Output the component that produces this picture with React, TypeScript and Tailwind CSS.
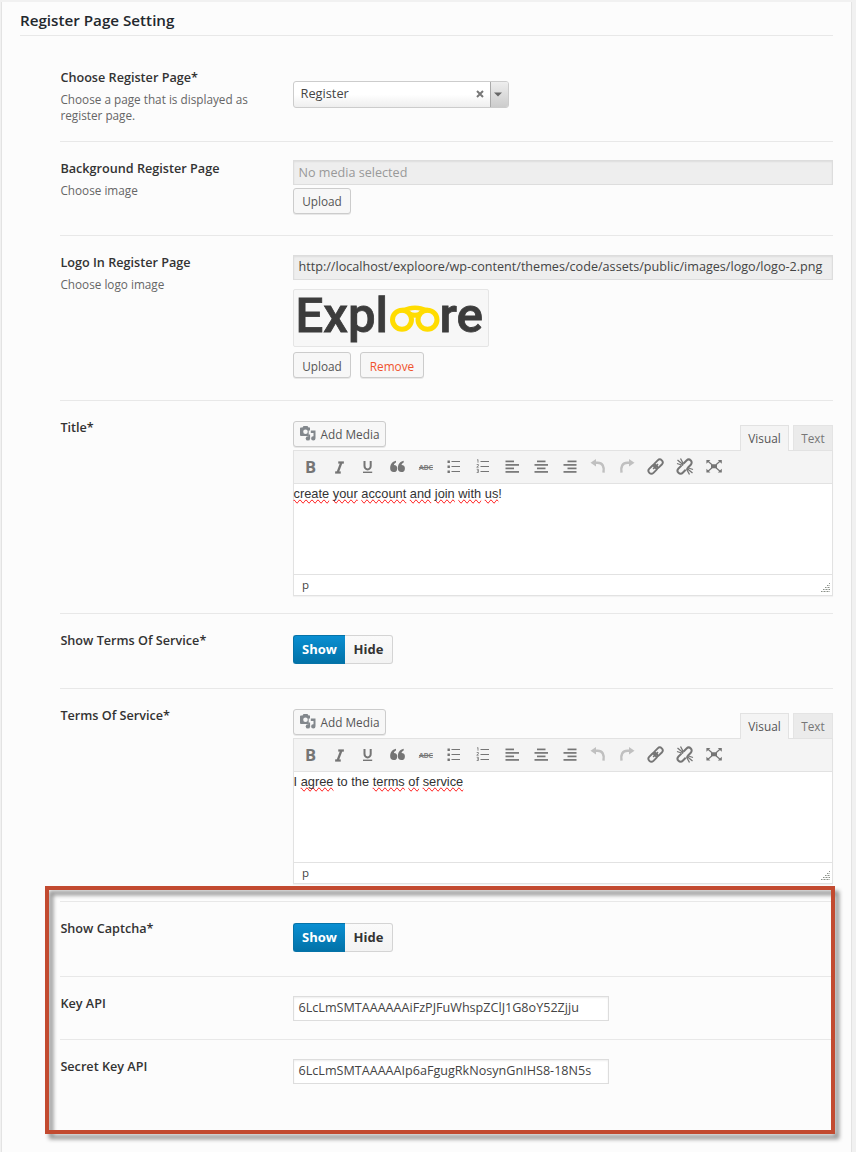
import React from "react";
import { Italic } from "lucide-react";

function Row({
  label,
  desc,
  className,
  children,
}: {
  label: string;
  desc?: React.ReactNode;
  className: string;
  children: React.ReactNode;
}) {
  return (
    <div className={`ml-[60px] mr-[23px] flex ${className}`}>
      <div className="w-[233px] shrink-0 pt-[17px] pl-[0.4px]">
        <div className="text-[12.65px] font-semibold leading-[18px] text-[#333]">{label}</div>
        {desc && <div className="mt-[6px] whitespace-nowrap text-[11.75px] leading-[15.5px] text-[#666]">{desc}</div>}
      </div>
      <div className="w-[540px]">{children}</div>
    </div>
  );
}

function Button({ children, className = "" }: { children: React.ReactNode; className?: string }) {
  return (
    <button
      className={`flex h-[26px] items-center justify-center rounded-[3px] border border-[#ccc] bg-[#f7f7f7] text-[11.8px] leading-[16px] text-[#555] shadow-[0_1px_0_rgba(0,0,0,0.08)] ${className}`}
    >
      {children}
    </button>
  );
}

function Toggle() {
  return (
    <div className="flex h-[29px] text-[13px] font-bold">
      <div className="flex w-[52px] items-center justify-center rounded-l-[3px] border border-r-0 border-[#0673a8] bg-linear-to-b from-[#0a8fd2] to-[#0272a8] text-white">
        Show
      </div>
      <div className="flex w-[48px] items-center justify-center rounded-r-[3px] border border-l-0 border-[#d4d4d4] bg-linear-to-b from-[#fafafa] to-[#f3f3f3] text-[#333]">
        Hide
      </div>
    </div>
  );
}

function Glyph({ children, faded = false }: { children: React.ReactNode; faded?: boolean }) {
  return (
    <svg width="20" height="20" viewBox="0 0 20 20" fill="none" stroke={faded ? "#c0c0c0" : "#757575"} className="shrink-0">
      {children}
    </svg>
  );
}

function Lines({ rows }: { rows: number[][] }) {
  return (
    <Glyph>
      {rows.map(([a, b], i) => (
        <path key={i} d={`M${a} ${4.4 + i * 3.5}H${b}`} strokeWidth="1.7" />
      ))}
    </Glyph>
  );
}

function Toolbar() {
  return (
    <div className="flex h-[33px] items-center gap-[8.8px] border-b border-[#e2e2e2] bg-[#f4f4f4] pl-[6.5px]">
      <span className="w-5 shrink-0 text-center text-[16.5px] font-bold leading-5 text-[#757575]">B</span>
      <span className="flex w-5 shrink-0 justify-center">
        <Italic size={15} strokeWidth={3.6} color="#757575" strokeLinecap="butt" />
      </span>
      <Glyph>
        <path d="M6.5 4v5a3.1 3.4 0 0 0 6.2 0V4" strokeWidth="2" />
        <path d="M5 15.300h9.200" strokeWidth="1.400" />
      </Glyph>
      <Glyph>
        <g fill="#757575" stroke="none">
          <path d="M9 3.800v1.600C7.600 6 7 6.900 6.900 8.100a3.500 3.500 0 1 1-3.700 3.500C3.100 7.600 4.900 4.600 9 3.800z" />
          <path d="M16.700 3.800v1.600c-1.400.6-2 1.500-2.100 2.700a3.500 3.500 0 1 1-3.700 3.500c-.1-4 1.700-7 5.800-7.800z" />
        </g>
      </Glyph>
      <span className="relative w-5 shrink-0 text-center text-[7.5px] font-bold leading-[18px] tracking-[-0.4px] text-[#858585]">
        ABC
        <span className="absolute left-[3px] right-[3px] top-[9px] h-px bg-[#757575]" />
      </span>
      <Glyph>
        <path d="M3.500 4.800h2.400M3.500 9.800h2.400M3.500 14.800h2.400" strokeWidth="2.400" />
        <path d="M7.500 4.500h8.500M7.500 9.500h8.500M7.500 14.500h8.500" strokeWidth="1" />
      </Glyph>
      <Glyph>
        <path d="M7.500 4.500h8.500M7.500 9.500h8.500M7.500 14.500h8.500" strokeWidth="1" />
        <path d="M4 3.200l1-.7v3.200M3.700 7.500h1.700v1.300l-1.700 1.400h2M3.700 12.300h1.700v3.200H3.700M4 13.900h1.400" strokeWidth=".8" />
      </Glyph>
      <Lines rows={[[3.5, 12], [3.5, 17], [3.5, 12], [3.5, 17]]} />
      <Lines rows={[[6, 14.500], [3.500, 17], [6, 14.500], [3.500, 17]]} />
      <Lines rows={[[7.500, 16.500], [3.500, 16.500], [7.500, 16.500], [3.500, 16.500]]} />
      <Glyph faded>
        <path d="M7 5.800h2.500c5 0 7 3.600 6 9.800" strokeWidth="2.500" />
        <path d="M8 2v7.600L2.500 5.800z" fill="#c0c0c0" stroke="none" />
      </Glyph>
      <Glyph faded>
        <path d="M13 5.800h-2.500c-5 0-7 3.600-6 9.800" strokeWidth="2.500" />
        <path d="M12 2v7.600l5.500-3.800z" fill="#c0c0c0" stroke="none" />
      </Glyph>
      <Glyph>
        <g transform="rotate(-45 10 10)" strokeWidth="1.900">
          <rect x="1.200" y="6.500" width="10" height="5.800" rx="2.900" />
          <rect x="8.800" y="6.500" width="10" height="5.800" rx="2.900" />
          <path d="M6.500 9.400h7" strokeWidth="1.500" />
        </g>
      </Glyph>
      <Glyph>
        <g transform="rotate(-45 10 10)" strokeWidth="2">
          <path d="M8.500 6.500H4.300a3 3 0 0 0 0 6h4.200M11.500 6.500h4.200a3 3 0 0 1 0 6h-4.200" />
        </g>
        <path d="M2.500 3l6 5M5.500 1.500l3 5.500M2 6.500l6 2M17.500 16l-6-5M14.500 17.500l-3-5.500M18 12.500l-6-2" strokeWidth="1.300" />
      </Glyph>
      <Glyph>
        <path d="M4 4.300l4 3.500M16 4.300l-4 3.500M4 14.300l4-3.500M16 14.300l-4-3.500" strokeWidth="1.200" />
        <path d="M7 7.300h6v4H7zM2.400 3h4l-4 3.700zM17.800 3h-4l4 3.700zM2.400 15.500h4l-4-3.700zM17.800 15.500h-4l4-3.700z" fill="#757575" stroke="none" />
      </Glyph>
    </div>
  );
}

function MediaIcon() {
  return (
    <svg width="16" height="15" viewBox="0 0 16 15" fill="#82878c" className="-mt-px">
      <path fillRule="evenodd" d="M1 1.500h1.500L3.500 0h4L8.500 1.500H10v3H8.700V10H1a1 1 0 0 1-1-1V2.500a1 1 0 0 1 1-1zm4.500 2a2.300 2.300 0 1 0 0 4.600 2.300 2.300 0 0 0 0-4.600z" />
      <path d="M10.800 4.500h4.700v7.800a2.200 2.200 0 1 1-2-2.100V7h-2.700z" />
      <circle cx="7.900" cy="12.400" r="2.200" />
      <path d="M8.300 8.500h1.800v4H8.300z" />
    </svg>
  );
}

function Editor({ children }: { children: React.ReactNode }) {
  return (
    <div className="pt-[20px]">
      <div className="flex h-[29px] items-start justify-between">
        <Button className="w-[93px] gap-[5px]">
          <MediaIcon />
          <span>Add Media</span>
        </Button>
        <div className="flex gap-[4px] pt-[4px] text-[11.8px] leading-[16px]">
          <div className="relative z-10 flex h-[26px] w-[49px] items-center justify-center border border-b-0 border-[#e2e2e2] bg-[#f4f4f4] pb-px text-[#555]">
            Visual
          </div>
          <div className="flex h-[25px] w-[40px] items-center justify-center border border-b-0 border-[#e4e4e4] bg-[#ebebeb] text-[#777]">
            Text
          </div>
        </div>
      </div>
      <div className="h-[146px] border border-[#e2e2e2] bg-white shadow-[0_1px_1px_rgba(0,0,0,0.04)]">
        <Toolbar />
        <div className="-ml-px h-[91px] border-b border-[#e2e2e2] pl-[0.5px] pt-[2px] font-['Liberation_Sans',sans-serif] text-[12.83px] leading-[15px] text-[#333]">
          {children}
        </div>
        <div className="flex h-[20px] items-center justify-between pl-[8px] pr-[2px] text-[11.500px] text-[#444]">
          <span>p</span>
          <svg width="9" height="9" viewBox="0 0 9 9" className="mt-[4px]" stroke="#8b9088" strokeDasharray="1 .5">
            <path d="M0 8.500h9M2 6.500h7M4 4.500h5M6 2.500h3M8 .5h1" />
          </svg>
        </div>
      </div>
    </div>
  );
}

function Misspelt({ children }: { children: string }) {
  return <span className="[text-decoration-line:spelling-error]">{children}</span>;
}

function Field({ children, className = "" }: { children: React.ReactNode; className?: string }) {
  return (
    <div className={`flex h-[25px] items-center overflow-hidden whitespace-nowrap border border-[#ddd] pl-[4.5px] shadow-[inset_0_1px_2px_rgba(0,0,0,0.07)] ${className}`}>
      {children}
    </div>
  );
}

function Logo() {
  return (
    <svg width="194" height="56" viewBox="0 0 194 56" fill="#3c3c3c" stroke="#3c3c3c" strokeWidth=".8" className="overflow-visible font-['Roboto',sans-serif] text-[49px] font-medium">
      <text x="1.5" y="41.500" textLength="92.500" lengthAdjust="spacingAndGlyphs">Expl</text>
      <text x="145.500" y="41.500" textLength="43.500" lengthAdjust="spacingAndGlyphs">re</text>
      <g fill="none" stroke="#ffdc00" strokeWidth="5">
        <circle cx="108" cy="29.700" r="9.500" />
        <circle cx="133.500" cy="29.700" r="9.500" />
        <path d="M106 20.500q6-.5 9-2 6-1.500 12 0 3 1.500 9 2" strokeWidth="4.500" />
        <path d="M115.500 24q5.500 2.500 11 0" strokeWidth="5" />
      </g>
    </svg>
  );
}

export default function App() {
  return (
    <div className="relative h-[1152px] w-[856px] overflow-hidden bg-[#f1f1f1] pl-px pt-[2px] font-['Open_Sans',sans-serif]">
      <div className="h-[1150px] w-[851px] border-x border-[#e3e3e3] bg-[#fcfcfc]">
        <div className="-ml-[2px] w-[856px]">
          <div className="ml-[20px] mr-[23px] h-[34px] border-b border-[#e8e8e8] text-[15.200px] font-semibold leading-[36px] text-[#23282d]">
            Register Page Setting
          </div>
          <Row
            label="Choose Register Page*"
            desc={<>Choose a page that is displayed as<br />register page.</>}
            className="mt-[15px] h-[91px] border-b border-[#e8e8e8]"
          >
            <div className="mt-[30px] flex h-[27px] w-[216px] overflow-hidden rounded-[3px] border border-[#ccc] bg-linear-to-b from-white from-50% to-[#eee] text-[12.8px] text-[#444]">
              <div className="flex flex-1 items-center justify-between pl-[6.5px] pr-[6px]">
                <span className="-mt-px">Register</span>
                <svg width="8" height="8" viewBox="0 0 8 8" stroke="#777" strokeWidth="2" className="-mt-[2px]">
                  <path d="M1 1l6 6M7 1L1 7" />
                </svg>
              </div>
              <div className="flex w-[18px] items-center justify-center border-l border-[#aaa] bg-linear-to-b from-[#eee] to-[#ccc]">
                <svg width="8" height="5" viewBox="0 0 8 5" fill="#666" className="mr-[4px]">
                  <path d="M0 .5h8L4 4.500z" />
                </svg>
              </div>
            </div>
          </Row>
          <Row label="Background Register Page" desc="Choose image" className="h-[94px] border-b border-[#e8e8e8]">
            <Field className="mt-[18px] bg-[#eee] pt-px text-[12.600px] text-[#999]">No media selected</Field>
            <Button className="mt-[3px] w-[58px]">Upload</Button>
          </Row>
          <Row label="Logo In Register Page" desc="Choose logo image" className="h-[165px] border-b border-[#e8e8e8]">
            <Field className="mt-[19px] bg-[#eee] text-[12.620px] text-[#444]">
              http://localhost/exploore/wp-content/themes/code/assets/public/images/logo/logo-2.png
            </Field>
            <div className="mt-[9px] h-[58px] w-[196px] rounded-[2px] border border-[#e5e5e5] bg-[#f7f7f7]">
              <Logo />
            </div>
            <div className="mt-[5px] flex gap-[9px]">
              <Button className="w-[58px] pt-px">Upload</Button>
              <Button className="w-[64px] pt-px text-[#f0532d]!">Remove</Button>
            </div>
          </Row>
          <Row label="Title*" className="h-[213px] border-b border-[#e8e8e8]">
            <Editor>
              <Misspelt>create</Misspelt> <Misspelt>your</Misspelt> <Misspelt>account</Misspelt> <Misspelt>and</Misspelt>{" "}
              <Misspelt>join</Misspelt> <Misspelt>with</Misspelt> <Misspelt>us</Misspelt>!
            </Editor>
          </Row>
          <Row label="Show Terms Of Service*" className="h-[75px] border-b border-[#e8e8e8]">
            <div className="pt-[21px]"><Toggle /></div>
          </Row>
          <Row label="Terms Of Service*" className="h-[213px] border-b border-[#e8e8e8]">
            <Editor>
              I <Misspelt>agree</Misspelt> to the <Misspelt>terms</Misspelt> <Misspelt>of</Misspelt> <Misspelt>service</Misspelt>
            </Editor>
          </Row>
          <Row label="Show Captcha*" className="h-[75px] border-b border-[#e8e8e8]">
            <div className="pt-[21px]"><Toggle /></div>
          </Row>
          <Row label="Key API" className="h-[63px] border-b border-[#e8e8e8]">
            <Field className="mt-[19px] w-[316px] bg-white text-[12.600px] text-[#444]">6LcLmSMTAAAAAAiFzPJFuWhspZClJ1G8oY52Zjju</Field>
          </Row>
          <Row label="Secret Key API" className="h-[80px]">
            <Field className="mt-[19px] w-[316px] bg-white text-[12.600px] text-[#444]">6LcLmSMTAAAAAIp6aFgugRkNosynGnIHS8-18N5s</Field>
          </Row>
        </div>
      </div>
      <div className="pointer-events-none absolute left-[45px] top-[886px] h-[248px] w-[790px] border-4 border-[#c24a30] drop-shadow-[4px_5px_2px_rgba(0,0,0,0.45)]" />
    </div>
  );
}
